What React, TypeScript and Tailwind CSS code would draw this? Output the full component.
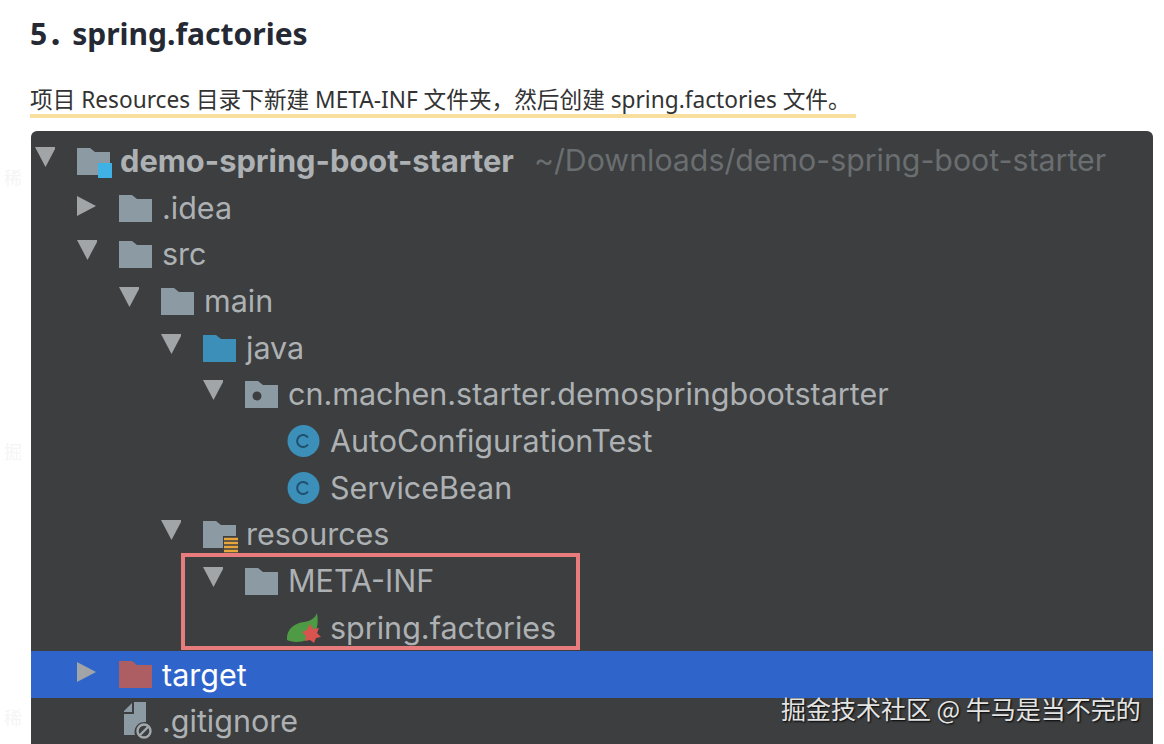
import React from 'react';

const uiFont = { fontFamily: '"Noto Sans", "Noto Sans CJK SC", sans-serif' };

const Arrow = ({ open }: { open: boolean }) =>
  open ? (
    <svg width="20" height="20" viewBox="0 0 20 20" className="-mt-2"><path d="M0 0H21L10.5 20Z" fill="#a2a5a7" /></svg>
  ) : (
    <svg width="20" height="20" viewBox="0 0 20 20" className="-mt-1"><path d="M0 0L19 10L0 20Z" fill="#a2a5a7" /></svg>
  );

const Folder = ({ color = '#8c9aa4', children }: { color?: string; children?: React.ReactNode }) => (
  <svg width="36" height="34" viewBox="0 0 36 34" className="overflow-visible">
    <path d="M0 4H13L18 8H33V31H0Z" fill={color} />
    {children}
  </svg>
);

const ClassIcon = () => (
  <svg width="34" height="34" viewBox="0 0 34 34">
    <circle cx="16.5" cy="17" r="16" fill="#3c8fb8" />
    <path d="M21 13.5a6 6 0 1 0 0 7" fill="none" stroke="#1f4f6e" strokeWidth="2" />
  </svg>
);

const SpringIcon = () => (
  <svg width="36" height="34" viewBox="0 0 36 34" className="overflow-visible">
    <path d="M0 29C-1 18 8 12 17 11C24 10 28 7 30 2C32 14 30 24 20 29C12 32 4 31 0 29Z" fill="#4f9a44" />
    <path d="M23 13L26 18L32 17L30 22L34 26L29 27L27 32L23 29L18 30L19 25L15 21L20 19Z" fill="#d9534f" />
  </svg>
);

const IgnoreIcon = () => (
  <svg width="30" height="38" viewBox="0 0 30 38" className="ml-[5px] overflow-visible">
    <path d="M0 9L8 1V10H0Z" fill="#8c9aa4" />
    <path d="M10 0H22V20A10 10 0 0 0 11 33H0V12H10Z" fill="#8c9aa4" />
    <circle cx="20" cy="29" r="6.5" fill="none" stroke="#a2a9ad" strokeWidth="2.4" />
    <path d="M16 33L24 25" stroke="#a2a9ad" strokeWidth="2.4" />
  </svg>
);

type Row = {
  depth: number;
  arrow?: 'open' | 'closed';
  icon: React.ReactNode;
  name: string;
  selected?: boolean;
  hint?: string;
};

const rows: Row[] = [
  {
    depth: 0,
    arrow: 'open',
    name: 'demo-spring-boot-starter',
    hint: '~/Downloads/demo-spring-boot-starter',
    icon: (
      <Folder>
        <rect x="21" y="19" width="14" height="15" fill="#3fb1e5" />
      </Folder>
    ),
  },
  { depth: 1, arrow: 'closed', name: '.idea', icon: <Folder /> },
  { depth: 1, arrow: 'open', name: 'src', icon: <Folder /> },
  { depth: 2, arrow: 'open', name: 'main', icon: <Folder /> },
  { depth: 3, arrow: 'open', name: 'java', icon: <Folder color="#3c8fb8" /> },
  {
    depth: 4,
    arrow: 'open',
    name: 'cn.machen.starter.demospringbootstarter',
    icon: (
      <Folder>
        <circle cx="12" cy="19" r="4.5" fill="#3c3e40" />
      </Folder>
    ),
  },
  { depth: 5, name: 'AutoConfigurationTest', icon: <ClassIcon /> },
  { depth: 5, name: 'ServiceBean', icon: <ClassIcon /> },
  {
    depth: 3,
    arrow: 'open',
    name: 'resources',
    icon: (
      <Folder>
        <rect x="20" y="19" width="15" height="17" fill="#3c3e40" />
        <path d="M21 22H35M21 26H35M21 30H35M21 34H35" stroke="#e5a73c" strokeWidth="2.4" />
      </Folder>
    ),
  },
  { depth: 4, arrow: 'open', name: 'META-INF', icon: <Folder /> },
  { depth: 5, name: 'spring.factories', icon: <SpringIcon /> },
  { depth: 1, arrow: 'closed', name: 'target', selected: true, icon: <Folder color="#ac5e62" /> },
  { depth: 1, name: '.gitignore', icon: <IgnoreIcon /> },
];

const indent = ['pl-[4px]', 'pl-[46px]', 'pl-[88px]', 'pl-[130px]', 'pl-[172px]', 'pl-[214px]'];

export default function App() {
  return (
    <div className="relative h-[744px] w-[1164px] overflow-hidden bg-white" style={uiFont}>
      <h2 className="pl-[30px] pt-[12px] text-[30px] font-bold leading-[44px] text-[#252933]">
        5<span className="tracking-[-5px]">．</span>spring.factories
      </h2>

      <p className="mt-[30px] pl-[30px] text-[22.67px] leading-[28px] text-[#333]">
        <span className="inline-block border-b-[4px] border-[#f8dfa0] pr-[5px]">
          项目 Resources 目录下新建 META-INF 文件夹，然后创建 spring.factories 文件。
        </span>
      </p>

      <div
        className="relative mt-[13px] ml-[31px] h-[640px] w-[1122px] rounded-t-[6px] bg-[#3c3e40] pt-[6.5px]"
        style={{ fontFamily: 'Inter, "Noto Sans", sans-serif' }}
      >
        {rows.map((r) => (
          <div
            key={r.name}
            className={`flex h-[46.7px] items-center text-[30.5px] ${indent[r.depth]} ${r.selected ? 'bg-[#2f65ca] text-white' : 'text-[#adb1b3]'}`}
          >
            <span className="flex w-[42px] shrink-0 items-center">
              {r.arrow && <Arrow open={r.arrow === 'open'} />}
            </span>
            <span className="flex w-[43px] shrink-0 items-center">{r.icon}</span>
            <span className={r.hint ? 'text-[30.8px] font-bold' : ''}>{r.name}</span>
            {r.hint && <span className="ml-[20px] text-[30.3px] text-[#6a6e70]">{r.hint}</span>}
          </div>
        ))}
        <div className="absolute left-[150px] top-[422px] h-[97px] w-[399px] border-[4px] border-[#e87b7b]" />
      </div>

      <div
        className="absolute left-[781px] top-[690px] text-[25px] leading-[36px] text-[#e4e4e4] [text-shadow:1px_1px_2px_#000]"
        style={{ fontFamily: '"Noto Sans CJK SC", sans-serif' }}
      >
        掘金技术社区 @ 牛马是当不完的
      </div>

      <span className="absolute left-[4px] top-[166px] text-[18px] leading-[24px] text-[#f5f5f5]">稀</span>
      <span className="absolute left-[4px] top-[440px] text-[18px] leading-[24px] text-[#f5f5f5]">掘</span>
      <span className="absolute left-[4px] top-[706px] text-[18px] leading-[24px] text-[#f5f5f5]">稀</span>
    </div>
  );
}
